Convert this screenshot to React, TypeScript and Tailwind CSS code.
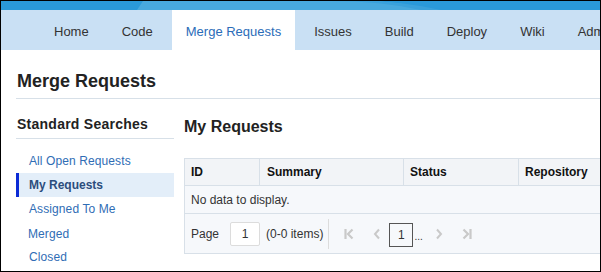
import React from "react";

const tabs = ["Home", "Code", "Merge Requests", "Issues", "Build", "Deploy", "Wiki", "Administration"];
const searches = ["All Open Requests", "My Requests", "Assigned To Me", "Merged", "Closed"];

function FirstIcon() {
  return (
    <svg width="10" height="12" viewBox="0 0 10 12" className="block">
      <path d="M1.5 1 V11" stroke="#c9c9c9" strokeWidth="2.2" fill="none" />
      <path d="M8.5 1.5 L4 6 L8.5 10.5" stroke="#c9c9c9" strokeWidth="2.2" fill="none" />
    </svg>
  );
}
function PrevIcon() {
  return (
    <svg width="8" height="12" viewBox="0 0 8 12" className="block">
      <path d="M6 1.5 L2 6 L6 10.5" stroke="#c9c9c9" strokeWidth="2" fill="none" />
    </svg>
  );
}
function NextIcon() {
  return (
    <svg width="8" height="12" viewBox="0 0 8 12" className="block">
      <path d="M2 1.5 L6 6 L2 10.5" stroke="#c9c9c9" strokeWidth="2" fill="none" />
    </svg>
  );
}
function LastIcon() {
  return (
    <svg width="10" height="12" viewBox="0 0 10 12" className="block">
      <path d="M1.5 1.5 L6 6 L1.5 10.5" stroke="#c9c9c9" strokeWidth="2.2" fill="none" />
      <path d="M8.5 1 V11" stroke="#c9c9c9" strokeWidth="2.2" fill="none" />
    </svg>
  );
}

export default function App() {
  return (
    <div
      className="w-[601px] h-[272px] border border-black overflow-hidden bg-white text-[#333]"
      style={{ fontFamily: '"Liberation Sans", Arial, sans-serif' }}
    >
      {/* top strip */}
      <div className="h-[9px] w-full">
        <svg width="599" height="9" viewBox="0 0 599 9" className="block">
          <rect width="599" height="9" fill="#2a99d9" />
          <path d="M136 9 L142 0 L360 0 Q400 0 430 9 Z" fill="#48a9de" />
          <path d="M330 0 Q380 0 420 9 L440 9 Q400 0 360 0 Z" fill="#3aa1db" />
        </svg>
      </div>
      {/* nav */}
      <div className="h-[40px] bg-[#c9e0f4] flex items-stretch pl-[39px] gap-[5px] whitespace-nowrap">
        {tabs.map((t) => (
          <div
            key={t}
            className={
              "flex items-center px-[14px] pt-[3px] text-[13px] " +
              (t === "Merge Requests" ? "bg-white text-[#2b6cb8]" : "text-[#333]")
            }
          >
            {t}
          </div>
        ))}
      </div>
      {/* body */}
      <div className="pl-[15px]">
        <div className="pt-[21px] pb-[6px] border-b border-[#d7e0e8]">
          <div className="text-[18px] leading-[21px] font-bold text-[#222] pl-px">Merge Requests</div>
        </div>
        <div className="flex gap-[10px]">
          {/* sidebar */}
          <div className="w-[158px] shrink-0">
            <div className="pt-[17px] pb-[6px] border-b border-[#d7e0e8]">
              <div className="text-[14px] leading-[16px] font-bold text-[#222] tracking-[0.25px] pl-px">
                Standard Searches
              </div>
            </div>
            <div className="pt-[10px] flex flex-col">
              {searches.map((s) =>
                s === "My Requests" ? (
                  <div
                    key={s}
                    className="h-[24px] flex items-center bg-[#e3eef9] border-l-[3px] border-[#0b2bd6] pl-[10px] text-[12px] font-bold text-[#2c4d7d]"
                  >
                    {s}
                  </div>
                ) : (
                  <div
                    key={s}
                    className={
                      "h-[24px] flex items-center text-[12px] text-[#2f6db5] tracking-[0.1px] " +
                      (s === "Merged" ? "pl-[12px] pt-[1px]" : "pl-[13px]")
                    }
                  >
                    {s}
                  </div>
                )
              )}
            </div>
          </div>
          {/* main */}
          <div className="flex-1 min-w-0">
            <div className="pt-[18px] text-[16px] leading-[19px] font-bold text-[#222]">My Requests</div>
            <div className="mt-[22px] w-[470px] border border-[#d8e0e8] bg-[#f6f8fb] text-[12px]">
              <div className="flex h-[27px] bg-[#f2f4f7] border-b border-[#d8e0e8] font-bold text-[#111]">
                <div className="w-[75px] px-[6px] flex items-center border-r border-[#d8e0e8]">ID</div>
                <div className="w-[144px] px-[7px] flex items-center border-r border-[#d8e0e8]">Summary</div>
                <div className="w-[115px] px-[6px] flex items-center border-r border-[#d8e0e8]">Status</div>
                <div className="flex-1 px-[6px] flex items-center">Repository</div>
              </div>
              <div className="h-[28px] flex items-center px-[6px] border-b border-[#d8e0e8] text-[#333]">
                No data to display.
              </div>
              <div className="h-[39px] flex items-center pl-[6px] text-[#333]">
                <span>Page</span>
                <div className="ml-[11px] w-[30px] h-[24px] bg-white border border-[#dcdcdc] rounded-[2px] flex items-center justify-center">
                  1
                </div>
                <span className="ml-[6px]">(0-0 items)</span>
                <div className="ml-[5px] w-px h-[30px] bg-[#dcdcdc]" />
                <div className="ml-[15px]">
                  <FirstIcon />
                </div>
                <div className="ml-[19px]">
                  <PrevIcon />
                </div>
                <div className="ml-[8px] w-[24px] h-[24px] border border-[#555] flex items-center justify-center text-[#333] mt-[2px]">
                  1
                </div>
                <span className="ml-px text-[10px] leading-none mt-[6px]">...</span>
                <div className="ml-[12px]">
                  <NextIcon />
                </div>
                <div className="ml-[19px]">
                  <LastIcon />
                </div>
              </div>
            </div>
          </div>
        </div>
      </div>
    </div>
  );
}
